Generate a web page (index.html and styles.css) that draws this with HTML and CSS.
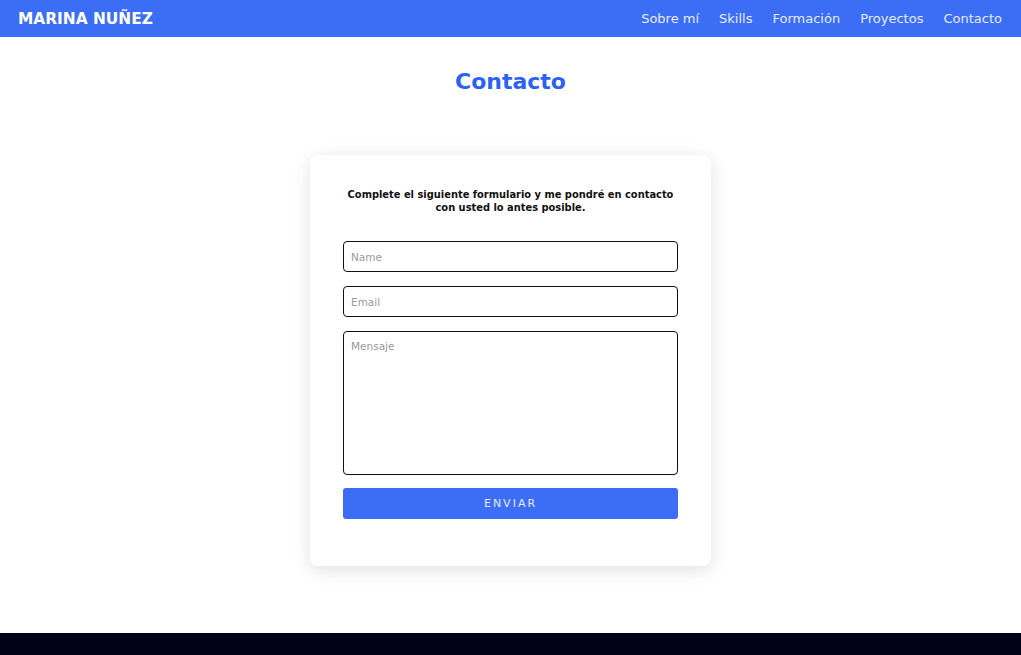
FILE: index.html
```html
<!DOCTYPE html>
<html lang="es">
<head>
<meta charset="utf-8">
<title>Contacto</title>
<link rel="stylesheet" href="styles.css">
</head>
<body>
<header class="navbar">
  <div class="brand">MARINA NUÑEZ</div>
  <nav class="nav">
    <a href="#">Sobre mí</a>
    <a href="#">Skills</a>
    <a href="#">Formación</a>
    <a href="#">Proyectos</a>
    <a href="#">Contacto</a>
  </nav>
</header>
<main class="main">
  <h1 class="title">Contacto</h1>
  <form class="card">
    <p class="intro">Complete el siguiente formulario y me pondré en contacto con usted lo antes posible.</p>
    <input class="field" type="text" placeholder="Name">
    <input class="field" type="email" placeholder="Email">
    <textarea class="field area" placeholder="Mensaje"></textarea>
    <button class="send" type="button">ENVIAR</button>
  </form>
</main>
<footer class="footer"></footer>
</body>
</html>
```
FILE: styles.css
```css
* { box-sizing: border-box; }
html, body { margin: 0; padding: 0; }
body {
  font-family: "DejaVu Sans", sans-serif;
  background: #ffffff;
  color: #111;
  min-height: 655px;
  display: flex;
  flex-direction: column;
}
.navbar {
  height: 37px;
  background: #3b6ef5;
  display: flex;
  align-items: center;
  justify-content: space-between;
  padding: 0 19px 0 18px;
}
.brand {
  color: #ffffff;
  font-weight: bold;
  font-size: 15.4px;
}
.nav {
  display: flex;
  gap: 20px;
}
.nav a {
  color: #e6ebff;
  text-decoration: none;
  font-size: 13px;
}
.main {
  flex: 1;
  display: flex;
  flex-direction: column;
  align-items: center;
}
.title {
  margin: 30px 0 0;
  height: 30px;
  line-height: 30px;
  font-size: 22px;
  font-weight: bold;
  color: #2c62f2;
}
.card {
  margin-top: 58px;
  width: 401px;
  background: #fff;
  border-radius: 8px;
  box-shadow: 0 4px 18px rgba(0,0,0,0.12);
  padding: 33px 33px 47px 33px;
  display: flex;
  flex-direction: column;
}
.intro {
  margin: 0 -4px 27px;
  text-align: center;
  font-size: 9.9px;
  font-weight: bold;
  line-height: 13px;
  color: #111;
}
.field {
  display: block;
  width: 100%;
  height: 31px;
  border: 1px solid #111;
  border-radius: 4px;
  padding: 0 7px;
  font-family: inherit;
  font-size: 10.5px;
  color: #333;
  margin: 0 0 14px;
  outline: none;
}
.field::placeholder { color: #9a9a9a; }
.area {
  height: 144px;
  padding: 8px 7px;
  resize: none;
  margin-bottom: 13px;
}
.send {
  height: 31px;
  width: 100%;
  border: none;
  border-radius: 3px;
  background: #3b6ef5;
  color: #e6ebff;
  font-family: inherit;
  font-size: 11px;
  letter-spacing: 2px;
}
.footer {
  height: 22px;
  background: #010119;
}
```
